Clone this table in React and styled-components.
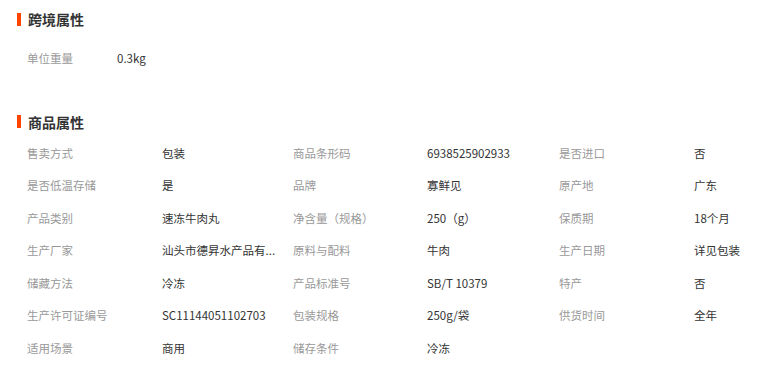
import React from "react";
import styled, { createGlobalStyle } from "styled-components";

const Global = createGlobalStyle`
  html, body { margin: 0; padding: 0; background: #fff; }
  body {
    font-family: "Noto Sans CJK SC", "Noto Sans", sans-serif;
    color: #333;
    overflow: hidden;
  }
`;

const Page = styled.div`
  width: 778px;
  padding-top: 9px;
`;

const Section = styled.section`
  margin-top: ${(p) => p.$top || 0}px;
`;

const Title = styled.h3`
  display: flex;
  align-items: center;
  gap: 7px;
  margin: 0;
  padding-left: 17px;
  height: 20px;
  font-size: 14px;
  font-weight: 700;
  color: #333;
  line-height: 20px;
  &::before {
    content: "";
    display: block;
    width: 4px;
    height: 13px;
    background: #ff4400;
  }
`;

const Grid = styled.div`
  display: grid;
  grid-template-columns: ${(p) => p.$cols};
  grid-auto-rows: 32.5px;
  padding-left: 27px;
  margin-top: ${(p) => p.$gap}px;
`;

const Cell = styled.div`
  display: flex;
  align-items: center;
  font-size: 11.5px;
  line-height: 16px;
  white-space: nowrap;
  min-width: 0;
  color: ${(p) => (p.$label ? "#999" : "#333")};
`;

const cross = [["单位重量", "0.3kg"]];

const attrs = [
  ["售卖方式", "包装"], ["商品条形码", "6938525902933"], ["是否进口", "否"],
  ["是否低温存储", "是"], ["品牌", "寡鲜见"], ["原产地", "广东"],
  ["产品类别", "速冻牛肉丸"], ["净含量（规格）", "250（g）"], ["保质期", "18个月"],
  ["生产厂家", "汕头市德昇水产品有..."], ["原料与配料", "牛肉"], ["生产日期", "详见包装"],
  ["储藏方法", "冷冻"], ["产品标准号", "SB/T 10379"], ["特产", "否"],
  ["生产许可证编号", "SC11144051102703"], ["包装规格", "250g/袋"], ["供货时间", "全年"],
  ["适用场景", "商用"], ["储存条件", "冷冻"],
];

const Pairs = ({ items }) =>
  items.map(([k, v], i) => (
    <React.Fragment key={i}>
      <Cell $label>{k}</Cell>
      <Cell>{v}</Cell>
    </React.Fragment>
  ));

export default function App() {
  return (
    <Page>
      <Global />
      <Section>
        <Title>跨境属性</Title>
        <Grid $cols="90px 1fr" $gap={13}>
          <Pairs items={cross} />
        </Grid>
      </Section>
      <Section $top={37}>
        <Title>商品属性</Title>
        <Grid $cols="135px 131px 134px 132px 135px 1fr" $gap={5}>
          <Pairs items={attrs} />
        </Grid>
      </Section>
    </Page>
  );
}
